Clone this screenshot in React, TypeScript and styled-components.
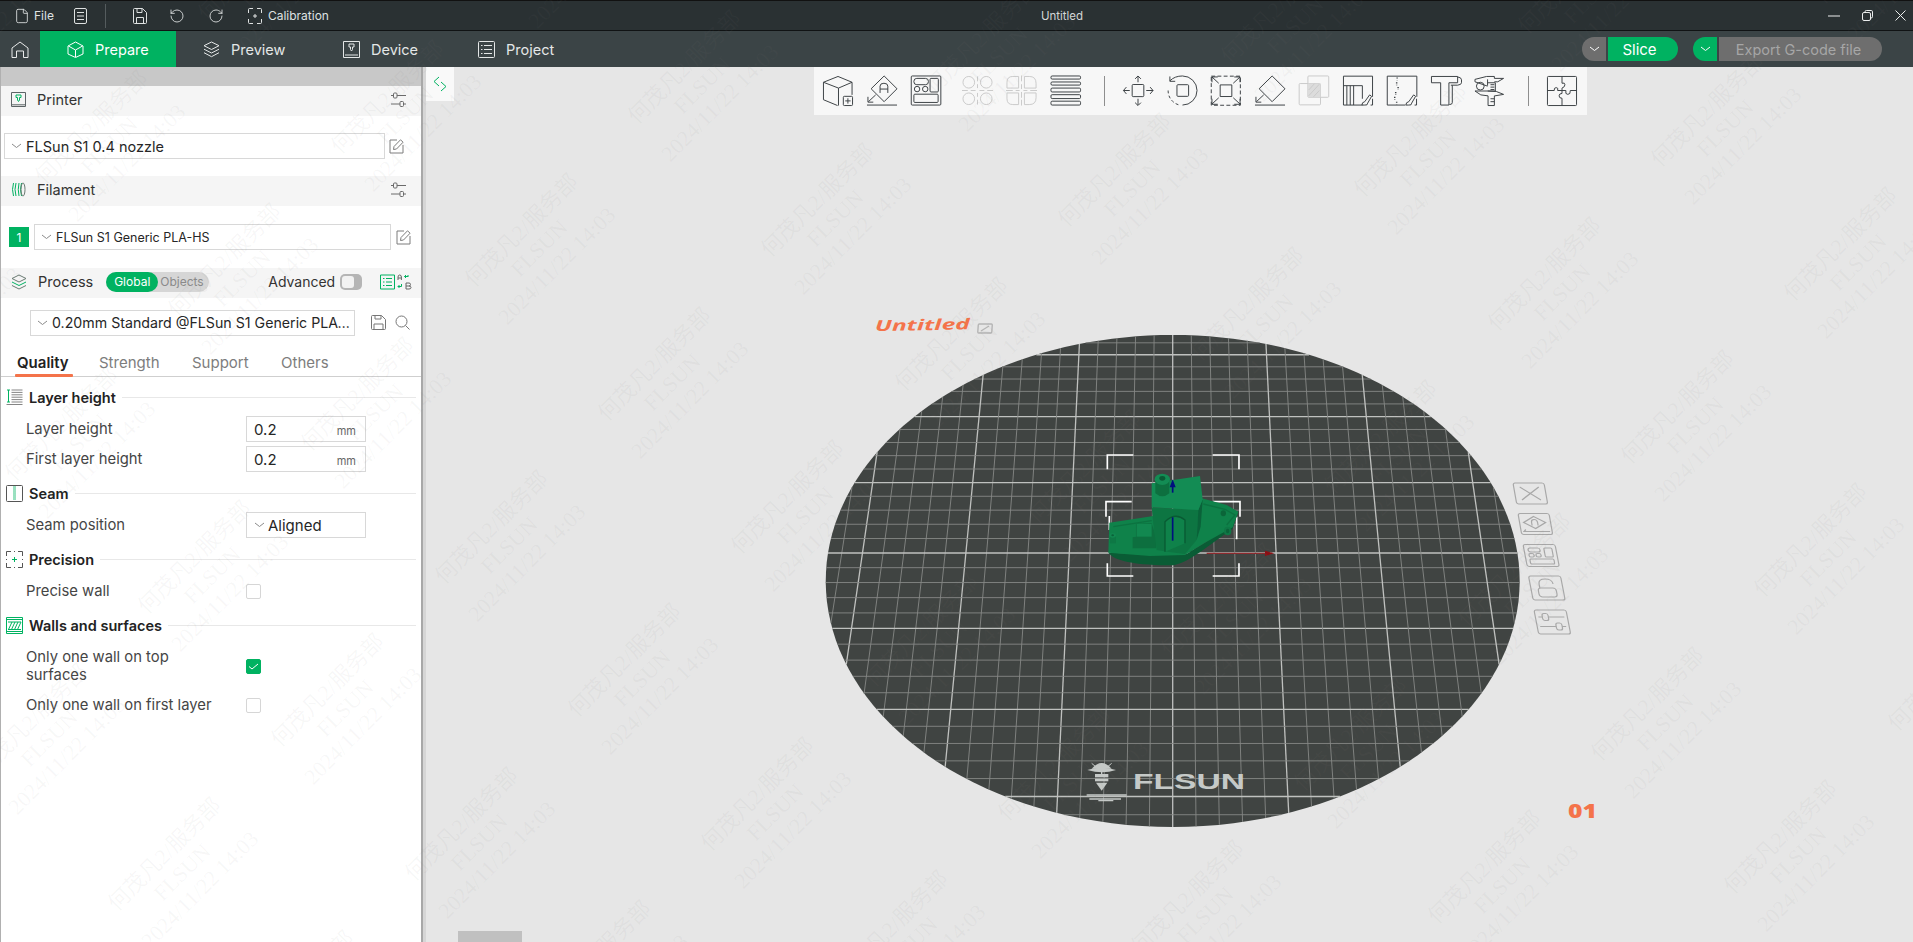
import React from 'react';
import styled, { createGlobalStyle } from 'styled-components';
import { File, RotateCcw, RotateCw } from 'lucide-react';

const GREEN = '#00b261';
const FONT = `Inter, "Noto Sans", "Liberation Sans", sans-serif`;

const Global = createGlobalStyle`
  html, body { margin: 0; padding: 0; background: #e6e6e6; }
  body { font-family: ${FONT}; overflow: hidden; }
  * { box-sizing: border-box; }
`;

const Page = styled.div`
  position: relative; width: 100vw; height: 100vh; display: flex; flex-direction: column; overflow: hidden;
`;

const Glyph = styled.svg<{ $w?: number; $h?: number; $c?: string; $ml?: number }>`
  width: ${p => p.$w ?? 16}px; height: ${p => p.$h ?? p.$w ?? 16}px; flex: none; display: block;
  fill: none; stroke: currentColor; stroke-width: 1; color: ${p => p.$c ?? 'inherit'};
  stroke-linejoin: round; margin-left: ${p => p.$ml ?? 0}px;
`;

/* ---------- title bar ---------- */
const TitleBar = styled.header`
  height: 31px; flex: none; display: flex; align-items: center; background: #2a3133; color: #e4e6e6;
  border-top: 1px solid #111; border-bottom: 1px solid #101314; padding-left: 14px;
`;
const TitleTools = styled.div`
  width: 1026px; flex: none; display: flex; align-items: center; font-size: 12px;
`;
const TitleItem = styled.span<{ $ml?: number }>`
  display: flex; align-items: center; gap: 4px; margin-left: ${p => p.$ml ?? 0}px; color: #dfe2e2;
`;
const TitleSep = styled.i`
  width: 1px; height: 24px; background: #555c5e; margin-left: 18px;
`;
const DocTitle = styled.div`
  font-size: 11.5px; color: #d4d6d6; width: 44px; text-align: center; white-space: nowrap;
`;
const WinControls = styled.div`
  margin-left: auto; display: flex; align-items: center; gap: 22px; padding-right: 7px; color: #eceeee;
`;

/* ---------- nav ---------- */
const NavBar = styled.nav`
  height: 36px; flex: none; display: flex; background: #3b4446; color: #e8eaea;
`;
const HomeBtn = styled.div`
  width: 40px; display: flex; align-items: center; justify-content: center; color: #e8eaea;
`;
const NavTab = styled.div<{ $active?: boolean; $w: number }>`
  width: ${p => p.$w}px; display: flex; align-items: center; gap: 11px; padding-left: 27px; font-size: 14.5px;
  background: ${p => (p.$active ? GREEN : 'transparent')}; color: ${p => (p.$active ? '#fff' : '#e4e7e7')};
`;
const NavActions = styled.div`
  margin-left: auto; display: flex; align-items: center; gap: 15px; padding-right: 31px;
`;
const SplitBtn = styled.div`
  display: flex; align-items: stretch; height: 24px; gap: 2px;
`;
const SplitCaret = styled.div<{ $on?: boolean }>`
  width: 24px; border-radius: 12px 0 0 12px; display: flex; align-items: center; justify-content: center;
  background: ${p => (p.$on ? GREEN : '#6e6e6e')}; color: #fff;
`;
const SplitMain = styled.div<{ $on?: boolean; $w: number }>`
  width: ${p => p.$w}px; border-radius: 0 12px 12px 0; display: flex; align-items: center; justify-content: center;
  font-size: ${p => (p.$on ? 15 : 14.5)}px; padding-right: ${p => (p.$on ? 7 : 4)}px;
  background: ${p => (p.$on ? GREEN : '#6e6e6e')}; color: ${p => (p.$on ? '#fff' : '#a6a6a6')};
`;

/* ---------- sidebar ---------- */
const Body = styled.main`
  flex: 1; display: flex; min-height: 0;
`;
const Sidebar = styled.aside`
  width: 423px; flex: none; background: #fff; border-left: 1px solid #b0b0b0; border-right: 2px solid #a8a8a8;
  display: flex; flex-direction: column;
`;
const Divider = styled.div`
  width: 3px; flex: none; background: #d6d6d6;
`;
const GrayStrip = styled.div`
  height: 19px; flex: none; background: #c8c8c8;
`;
const PanelHead = styled.div`
  height: 30px; flex: none; display: flex; align-items: center; background: #f5f5f5; padding: 0 15px 3px 10px;
  font-size: 14.5px; color: #333; gap: 11px;
`;
const PushRight = styled.div<{ $mr?: number }>`
  margin-left: auto; margin-right: ${p => p.$mr ?? 0}px; display: flex; align-items: center;
`;
const SelectRow = styled.div<{ $h: number; $pl: number; $gap: number }>`
  height: ${p => p.$h}px; flex: none; display: flex; align-items: center; padding-left: ${p => p.$pl}px; gap: ${p => p.$gap}px;
`;
const Select = styled.div<{ $w: number; $fs?: number }>`
  width: ${p => p.$w}px; height: 26px; flex: none; background: #fff; border: 1px solid #d8d8d8; display: flex; align-items: center;
  padding-left: 6px; gap: 4px; font-size: ${p => p.$fs ?? 14.5}px; color: #262626; min-width: 0;
`;
const Clip = styled.span`
  white-space: nowrap; overflow: hidden; text-overflow: ellipsis; min-width: 0;
`;
const Badge = styled.div`
  width: 20px; height: 20px; flex: none; background: ${GREEN}; color: #fff; font-size: 12px;
  display: flex; align-items: center; justify-content: center;
`;
const Toggle = styled.div`
  width: 103px; height: 20px; flex: none; border-radius: 10px; background: #d6d6d6; display: flex; align-items: center;
  font-size: 12px; color: #8a8a8a; margin-left: 2px;
`;
const TogglePill = styled.span`
  width: 52px; height: 20px; border-radius: 10px; background: ${GREEN}; color: #fff; display: flex; align-items: center; justify-content: center;
`;
const ToggleOff = styled.span`
  margin-left: 2px;
`;
const AdvLabel = styled.span`
  margin-left: 48px; font-size: 14px; color: #333;
`;
const Switch = styled.div`
  width: 22px; height: 16px; flex: none; border-radius: 5px; background: #b5b5b5; margin-left: -6px; display: flex; align-items: center; padding-left: 2px;
  &::before { content: ''; width: 12px; height: 12px; border-radius: 3px; background: #f2f2f2; }
`;
const Tabs = styled.div`
  height: 30px; flex: none; display: flex; border-bottom: 1px solid #cfcfcf; padding-left: 13px; font-size: 15px; color: #7d7d7d;
`;
const Tab = styled.div<{ $active?: boolean; $w: number }>`
  position: relative; width: ${p => p.$w}px; padding: 6px 0 0 3px; font-weight: ${p => (p.$active ? 600 : 400)};
  color: ${p => (p.$active ? '#222' : '#7d7d7d')};
  ${p => p.$active && `&::after { content: ''; position: absolute; left: 1px; bottom: -1px; width: 58px; height: 3px; background: #f4734a; border-radius: 1px; }`}
`;
const Settings = styled.div`
  padding: 7px 5px 0 5px; display: flex; flex-direction: column; gap: 8px;
`;
const Section = styled.section`
  display: flex; flex-direction: column; gap: 4px;
`;
const SecHead = styled.div`
  height: 26px; display: flex; align-items: center; gap: 6px; margin-bottom: 2px; font-size: 14.5px; font-weight: 600; color: #222;
  &::after { content: ''; flex: 1; height: 1px; background: #e8e8e8; margin-left: 0; }
`;
const Row = styled.div<{ $h?: number }>`
  min-height: ${p => p.$h ?? 26}px; display: flex; align-items: center; padding-left: 20px;
`;
const Label = styled.div`
  width: 220px; flex: none; padding: 0 22px 0 0; font-size: 14.8px; line-height: 18px; color: #454545;
`;
const Field = styled.div`
  width: 120px; height: 26px; border: 1px solid #d8d8d8; display: flex; align-items: center; padding: 0 9px 0 7px;
  font-size: 15px; color: #262626; gap: 3px; background: #fff;
`;
const Unit = styled.span`
  margin-left: auto; font-size: 11px; color: #666; padding-top: 3px;
`;
const Check = styled.div<{ $on?: boolean }>`
  width: 15px; height: 15px; border-radius: 2px; border: 1px solid ${p => (p.$on ? GREEN : '#d6d6d6')};
  background: ${p => (p.$on ? GREEN : '#fff')}; color: #fff; display: flex; align-items: center; justify-content: center;
`;

/* ---------- canvas ---------- */
const Canvas = styled.div`
  position: relative; flex: 1; min-width: 0; background: #e6e6e6; overflow: hidden;
`;
const Scene = styled.svg`
  position: absolute; left: 0; top: 0; width: 1487px; height: 875px;
`;
const Toolbar = styled.div`
  position: absolute; left: 388px; top: 0; width: 773px; height: 48px; background: #f7f7f7; display: flex; align-items: center;
  gap: 12px; padding-left: 8px; color: #3a3f42;
`;
const ToolSep = styled.i`
  width: 1px; height: 30px; background: #8e8e8e; margin: 0 5px 0 10px;
`;
const ToolGap = styled.span`
  width: 8px; margin-left: -12px; flex: none;
`;
const Collapse = styled.div`
  position: absolute; left: 0; top: 0; width: 28px; height: 34px; background: #f9f9f9; display: flex; align-items: center; justify-content: center;
`;
const DragHandle = styled.div`
  position: absolute; left: 32px; bottom: 0; width: 64px; height: 11px; background: #c0c0c0;
`;
const WatermarkLayer = styled.div`
  position: absolute; inset: 0; overflow: hidden; pointer-events: none; z-index: 5;
`;
const Mark = styled.div`
  position: absolute; transform: translate(-50%, -50%) rotate(-45deg); text-align: center; white-space: nowrap;
  font: 22px/25px "Liberation Serif", "Noto Sans CJK SC", serif; color: rgba(128, 128, 128, 0.065);
`;

/* ---------- geometry of the print bed ---------- */
const CX = 1172.7, YH = -1581, G = 2134, K = 0.1138, F = 344.7, CELL = 0.06;
const proj = (u: number, v: number): [number, number] => {
  const d = 1 - K * v;
  return [CX + (F * u) / d, YH + G / d];
};
const bedOutline = Array.from({ length: 160 }, (_, i) => {
  const a = (i / 160) * Math.PI * 2;
  return proj(Math.cos(a), Math.sin(a)).map(n => n.toFixed(1)).join(',');
}).join(' ');
type Seg = { x1: number; y1: number; x2: number; y2: number; major: boolean };
const gridSegs: Seg[] = [];
for (let i = -16; i <= 16; i++) {
  const t = i * CELL;
  const s = Math.sqrt(1 - t * t);
  const a = proj(t, -s), b = proj(t, s), c = proj(-s, t), d = proj(s, t);
  gridSegs.push({ x1: a[0], y1: a[1], x2: b[0], y2: b[1], major: i % 5 === 0 });
  gridSegs.push({ x1: c[0], y1: c[1], x2: d[0], y2: d[1], major: i % 5 === 0 });
}

const marks: { x: number; y: number }[] = [];
for (let m = -12; m <= 12; m++) {
  for (let n = -12; n <= 12; n++) {
    const x = 1695 + m * 163.3 + n * 133.3;
    const y = 425 - m * 163.3 + n * 133.3;
    if (x > -140 && x < 2050 && y > -140 && y < 1080) marks.push({ x, y });
  }
}

/* ---------- small icons ---------- */
const Chevron = ({ c = '#8a8a8a' }: { c?: string }) => (
  <Glyph $w={11} $h={6} $c={c} viewBox="0 0 11 6"><path d="M1 1l4.500 3.500L10 1" /></Glyph>
);
const Sliders = () => (
  <Glyph $w={15} $h={16} $c="#6a6a6a" viewBox="0 0 15 16">
    <path d="M0 3.500h2.500M6 3.500h9M0 12h9M12.500 12H15" /><rect x="2.500" y="1" width="3.500" height="5" rx="1" /><rect x="9" y="9.500" width="3.500" height="5" rx="1" />
  </Glyph>
);
const EditBox = () => (
  <Glyph $w={15} $h={15} $c="#7c7c7c" viewBox="0 0 15 15">
    <path d="M8 1H1v13h13V6" /><path d="M4.500 10.500l.5-3L11.500 .8l2.600 2.400L7.500 10z" />
  </Glyph>
);

const ToolIcons = {
  cube: (
    <>
      <path d="M1.500 7L16.500 1 31 7 17 13Z M1.500 7V25L16 31 M17 13V31 M31 7V20" />
      <rect x="22" y="21.500" width="9.500" height="9.500" rx="1" /><path d="M24 26.200h5.500M26.700 23.500v5.500" />
    </>
  ),
  arrange: (
    <>
      <path d="M18.700 .5L32 13.700 18.700 27 5.300 13.700Z" /><path d="M14.500 18V11q0-3 4-3t4 3v7M14.500 14h8" />
      <path d="M10 20L2.500 27M2 22v5.500h5.500M1 30.500h31" />
    </>
  ),
  plates: (
    <>
      <rect x="1.300" y=".5" width="30.500" height="30" rx="1" /><rect x="4" y="3" width="15" height="6.500" rx="3" /><rect x="20.700" y="3" width="8.500" height="14" rx="1" />
      <circle cx="7.300" cy="14" r="2.800" /><circle cx="15.700" cy="14" r="2.800" /><rect x="4" y="19.300" width="25" height="8.500" rx="1" />
    </>
  ),
  split: (
    <>
      <circle cx="7" cy="7" r="6" /><circle cx="25" cy="7" r="6" /><circle cx="7" cy="24" r="6" /><circle cx="25" cy="24" r="6" />
      <path d="M16 1v5M16 9v4M16 18v4M16 25v5M0 15.500h6M9 15.500h5M18 15.500h5M26 15.500h6" />
    </>
  ),
  parts: (
    <>
      <path d="M13 1H7Q1 1 1 7v6h12z M19 1h5q7 0 7 7v5H19z M13 18H1v6q0 6 6 6h6z M19 18h12v5q0 7-7 7h-5z" />
      <path d="M16 0v6M16 9v5M16 17v6M16 25v6M0 15.500h7M10 15.500h4M18 15.500h4M25 15.500h7" />
    </>
  ),
  layers: (
    <>
      <rect x="1" y=".5" width="30.500" height="3.200" rx="1.200" /><rect x="1" y="6.700" width="30.500" height="3.200" rx="1.200" /><rect x="1" y="13" width="30.500" height="4" rx="1.200" />
      <rect x="1" y="19.800" width="30.500" height="4" rx="1.200" /><rect x="1" y="26.500" width="30.500" height="4" rx="1.200" />
    </>
  ),
  move: (
    <>
      <rect x="10.500" y="9.300" width="12" height="12.500" rx="1" />
      <path d="M16.500 7V1M13.500 3.500l3-3 3 3M16.500 24v6.500M13.500 28l3 3 3-3M8 15.500H1.500M4.500 12l-3 3.500 3 3.500M25 15.500h7M29 12l3 3.500-3 3.500" />
    </>
  ),
  rotate: (
    <>
      <rect x="11.300" y="9.500" width="12" height="12" rx="1" />
      <path d="M4 5.500Q9 .5 17 .5a15 15 0 0 1 0 30" /><path d="M4 1v5h5.500" />
      <path d="M2.200 15.500a15 15 0 0 0 12 15" strokeDasharray="3 2.400" />
    </>
  ),
  scale: (
    <>
      <rect x="1.300" y=".7" width="30" height="30" strokeDasharray="4 2.400" /><rect x="10.500" y="9.700" width="12" height="12" />
      <path d="M9 8L2 1.500M2 7V1.500h6M24 8l7-6.500M31 7V1.500h-6M9 23l-7 6.500M2 24v5.700h6M24 23l7 6.500M31 24v5.700h-6" />
    </>
  ),
  flatten: (
    <>
      <path d="M18.700 .5L32 13.700 18.700 27 5.300 13.700Z" /><path d="M10 20L2.500 27M2 22v5.500h5.500M1 30.500h31" />
    </>
  ),
  boolean: (
    <>
      <rect x="10.200" y=".5" width="21.500" height="22" rx="1" /><rect x="1.200" y="8.300" width="22" height="22" rx="1" />
      <rect x="10.200" y="8.300" width="13" height="14.200" fill="#dcdcdc" stroke="none" />
      <path d="M11 15l6-6.500M11 21l11-12M16 22l6-6.500" />
    </>
  ),
  fuzzy: (
    <>
      <path d="M21 30.500H1.500V.7h30V22" /><path d="M1.500 10.500h19.500V24" /><path d="M5 10.500v20M8.500 10.500v20M12 10.500v20" />
      <path d="M20.500 30.500q0-3 3-3.500l5-7 2 1.500-4 7q0 2.500-3 2zM31.500 24v6.500h-2" />
    </>
  ),
  seam: (
    <>
      <path d="M20 30.500H1.300V.7h30.500V22" /><path d="M11.500 2v3M11 7v3M12.500 12v3M10 17v3M9 22v3M11 27v3" strokeDasharray="1.200 1.400" strokeWidth="1.500" />
      <path d="M20.500 30.500q0-3 3-3.500l5-7 2 1.500-4 7q0 2.500-3 2zM31.500 24v6.500h-2" />
    </>
  ),
  text: (
    <>
      <path d="M1.500 1h27v6.500H19.500v23h-8.500V7.500H1.500Z" /><path d="M28.500 1.500q4 .5 4 3v3q0 2-4 2.500H21.500M20 30q3 0 3-2V10" />
    </>
  ),
  caliper: (
    <>
      <path d="M1 4l12-3h8v2h9.500l-6 3.500H21M1 4v2.500L14 11M14 4v6.500" /><circle cx="6.500" cy="11" r="4" />
      <path d="M14 7.500h8V16h-8M17 9.500h4M17 12h4M17 14.500h4" />
      <path d="M1 16h13l9 .5 7.500 3-9 1.500H21V31h-6.500V21L7 20z M17 24h4M17 27h4" />
    </>
  ),
  puzzle: (
    <>
      <rect x="1.500" y="1" width="30" height="30" rx="1" />
      <path d="M16.500 1v7q3-1 3 1.500T16.500 13V15.500H12q1-3-1.500-3t-2 3H1.500M16.500 15.500v3q-3 0-3 2.500t3 2.500V31M16.500 15.500h4q-1 4 2 4t2.500-4h6.500" />
    </>
  ),
};
const Tool = ({ k, off }: { k: keyof typeof ToolIcons; off?: boolean }) => (
  <Glyph $w={32} $h={32} $c={off ? '#c9c9c9' : '#3a3f42'} viewBox="0 0 33 32">{ToolIcons[k]}</Glyph>
);

export default function App() {
  return (
    <Page>
      <Global />
      <TitleBar>
        <TitleTools>
          <TitleItem>
            <File size={16} strokeWidth={1.3} />
            File
          </TitleItem>
          <TitleItem $ml={20}>
            <Glyph $w={13} $h={16} viewBox="0 0 13 16"><rect x=".5" y=".5" width="12" height="15" rx="1.500" /><path d="M3 4.500h7M3 8h7M3 11.500h7" /></Glyph>
          </TitleItem>
          <TitleSep />
          <TitleItem $ml={27}>
            <Glyph $w={14} $h={16} viewBox="0 0 14 16"><path d="M1.500 .5h8l4 4v10a1 1 0 0 1-1 1h-11a1 1 0 0 1-1-1v-13a1 1 0 0 1 1-1z" /><path d="M4 .5v4h5v-4M3.500 15.500v-6h7v6" /></Glyph>
          </TitleItem>
          <TitleItem $ml={22}><RotateCcw size={16} strokeWidth={1.3} /></TitleItem>
          <TitleItem $ml={23}><RotateCw size={16} strokeWidth={1.3} /></TitleItem>
          <TitleItem $ml={24}>
            <Glyph $w={14} $h={16} viewBox="0 0 14 16" style={{ marginRight: 2 }}><path d="M.5 5V1.500a1 1 0 0 1 1-1H5M9 .5h3.500a1 1 0 0 1 1 1V5M13.500 11v3.500a1 1 0 0 1-1 1H9M5 15.500H1.500a1 1 0 0 1-1-1V11M5 8h4M7 6v4" /></Glyph>
            Calibration
          </TitleItem>
        </TitleTools>
        <DocTitle>Untitled</DocTitle>
        <WinControls>
          <Glyph $w={12} $h={12} viewBox="0 0 12 12"><path d="M0 6h12" /></Glyph>
          <Glyph $w={11} $h={11} viewBox="0 0 11 11"><rect x=".5" y="2.500" width="8" height="8" rx="1.500" /><path d="M3 2.500V1.800Q3 .5 4.300 .5h5Q10.500 .5 10.500 1.800v5Q10.500 8 9 8" /></Glyph>
          <Glyph $w={11} $h={11} viewBox="0 0 11 11"><path d="M.5 .5l10 10M10.500 .5l-10 10" /></Glyph>
        </WinControls>
      </TitleBar>

      <NavBar>
        <HomeBtn>
          <Glyph $w={18} $h={17} viewBox="0 0 18 17"><path d="M1 7L9 1l8 6v9.500h-4.500V10h-7v6.500H1z" /></Glyph>
        </HomeBtn>
        <NavTab $active $w={136}>
          <Glyph $w={17} $h={17} viewBox="0 0 17 17"><path d="M8.500 1L16 5v8l-7.500 3.500L1 13V5zM1.500 5l7 4 7-4M8.500 9v7" /></Glyph>
          Prepare
        </NavTab>
        <NavTab $w={140}>
          <Glyph $w={17} $h={17} viewBox="0 0 17 17"><path d="M8.500 1L16 4.700 8.500 8.500 1 4.700zM1 8.200l7.500 3.800L16 8.200M1 11.700l7.500 4L16 11.700" /></Glyph>
          Preview
        </NavTab>
        <NavTab $w={135}>
          <Glyph $w={17} $h={17} viewBox="0 0 17 17"><rect x=".5" y=".5" width="16" height="16" /><path d="M2 14h13M6 3h5v3H9.500v2.500L8.500 10l-1-1.500V6H6z" /></Glyph>
          Device
        </NavTab>
        <NavTab $w={135}>
          <Glyph $w={17} $h={17} viewBox="0 0 17 17"><rect x=".5" y=".5" width="16" height="16" rx="1" /><path d="M3 4.500h1.500M6 4.500h8M3 8.500h1.500M6 8.500h8M3 12.500h1.500M6 12.500h8" /></Glyph>
          Project
        </NavTab>
        <NavActions>
          <SplitBtn>
            <SplitCaret><Chevron c="#fff" /></SplitCaret>
            <SplitMain $on $w={70}>Slice</SplitMain>
          </SplitBtn>
          <SplitBtn>
            <SplitCaret $on><Chevron c="#fff" /></SplitCaret>
            <SplitMain $w={163}>Export G-code file</SplitMain>
          </SplitBtn>
        </NavActions>
      </NavBar>

      <Body>
        <Sidebar>
          <GrayStrip />
          <PanelHead>
            <Glyph $w={15} $h={15} $c="#5c6466" viewBox="0 0 15 15">
              <rect x=".5" y=".5" width="14" height="14" /><path d="M1 12.800h13" /><path d="M5 3h5v2.500H8.500V8L7.500 9.500 6.500 8V5.500H5z" stroke={GREEN} />
            </Glyph>
            Printer
            <PushRight><Sliders /></PushRight>
          </PanelHead>
          <SelectRow $h={60} $pl={3} $gap={4}>
            <Select $w={381}><Chevron /><Clip>FLSun S1 0.4 nozzle</Clip></Select>
            <EditBox />
          </SelectRow>
          <PanelHead>
            <Glyph $w={15} $h={15} $c="#6a7a72" viewBox="0 0 15 15">
              <path d="M2.500 1Q.5 7.500 2.500 14M5 1Q3 7.500 5 14M8 1Q6.500 7.500 8 14M10.500 1Q8.500 7.500 10.500 14" stroke={GREEN} /><ellipse cx="12" cy="7.500" rx="2" ry="6.500" />
            </Glyph>
            Filament
            <PushRight><Sliders /></PushRight>
          </PanelHead>
          <SelectRow $h={62} $pl={8} $gap={5}>
            <Badge>1</Badge>
            <Select $w={357} $fs={12.500}><Chevron /><Clip>FLSun S1 Generic PLA-HS</Clip></Select>
            <EditBox />
          </SelectRow>
          <PanelHead>
            <Glyph $w={16} $h={16} $c="#6a7a72" viewBox="0 0 16 16">
              <path d="M8 1l7 3.500L8 8 1 4.500z" /><path d="M1 8l7 3.500L15 8" stroke={GREEN} /><path d="M1 11.500L8 15l7-3.500" />
            </Glyph>
            Process
            <Toggle>
              <TogglePill>Global</TogglePill>
              <ToggleOff>Objects</ToggleOff>
            </Toggle>
            <AdvLabel>Advanced</AdvLabel>
            <Switch />
            <PushRight $mr={-7}>
              <Glyph $w={33} $h={16} $c="#666" viewBox="0 0 33 16">
                <rect x=".5" y="1" width="14" height="14" stroke={GREEN} /><path d="M3 4.500h1.500M6 4.500h6M3 8h1.500M6 8h6M3 11.500h1.500M6 11.500h6" stroke={GREEN} />
                <path d="M18 6V3q0-2 1.700-2t1.700 2v3M18 4h3.400" /><path d="M28 2.500h-3.500L26 1M24.500 2.500L26 4M28 1v2" stroke={GREEN} />
                <path d="M21.500 10v2.500H18L19.500 11M18 12.500L19.500 14" stroke={GREEN} /><path d="M26 9h3q1.500 0 1.500 1.500T29 12h-3zM29 12q2 0 2 1.500T29 15h-3v-3" />
              </Glyph>
            </PushRight>
          </PanelHead>
          <SelectRow $h={49} $pl={29} $gap={16}>
            <Select $w={325} $fs={14.2}><Chevron /><Clip>0.20mm Standard @FLSun S1 Generic PLA-HS</Clip></Select>
            <Glyph $w={15} $h={15} $c="#777" viewBox="0 0 15 15"><path d="M1.500 .5h9l4 4v9a1 1 0 0 1-1 1h-12a1 1 0 0 1-1-1v-12a1 1 0 0 1 1-1z" /><path d="M4 .5v3.500h6V.5M3 14.500V9h9v5.500" /></Glyph>
            <Glyph $w={15} $h={15} $c="#777" $ml={-7} viewBox="0 0 15 15"><circle cx="6.500" cy="6.500" r="5.500" /><path d="M10.500 10.500l4 4" /></Glyph>
          </SelectRow>
          <Tabs>
            <Tab $active $w={82}>Quality</Tab>
            <Tab $w={93}>Strength</Tab>
            <Tab $w={89}>Support</Tab>
            <Tab $w={80}>Others</Tab>
          </Tabs>
          <Settings>
            <Section>
              <SecHead>
                <Glyph $w={17} $h={17} $c="#666" viewBox="0 0 17 17">
                  <path d="M1 1h3M2.500 1v12M1 13h3" stroke={GREEN} /><path d="M5.500 1h11M5.500 3.400h11M5.500 5.800h11M5.500 8.200h11M5.500 10.600h11M5.500 13h11M.5 15.500h16" strokeWidth=".8" />
                </Glyph>
                Layer height
              </SecHead>
              <Row><Label>Layer height</Label><Field>0.2<Unit>mm</Unit></Field></Row>
              <Row><Label>First layer height</Label><Field>0.2<Unit>mm</Unit></Field></Row>
            </Section>
            <Section>
              <SecHead>
                <Glyph $w={17} $h={17} $c="#555" viewBox="0 0 17 17">
                  <rect x=".5" y=".5" width="16" height="16" rx="1" /><path d="M7 2h3M7 4h3M7 6h3M7 8h3M7 10h3M7 12h3M7 14h3" stroke={GREEN} strokeWidth=".8" />
                </Glyph>
                Seam
              </SecHead>
              <Row><Label>Seam position</Label><Field><Chevron />Aligned</Field></Row>
            </Section>
            <Section>
              <SecHead>
                <Glyph $w={17} $h={17} $c="#555" viewBox="0 0 17 17">
                  <path d="M.5 5V.5H5M8 .5h1M12 .5h4.500V5M.5 8v1M16.500 8v1M.5 12v4.500H5M8 16.500h1M12 16.500h4.500V12" /><path d="M6 8.500h5M8.500 6v5" stroke={GREEN} />
                </Glyph>
                Precision
              </SecHead>
              <Row><Label>Precise wall</Label><Check /></Row>
            </Section>
            <Section>
              <SecHead>
                <Glyph $w={17} $h={17} $c={GREEN} viewBox="0 0 17 17">
                  <path d="M.5 .5h16M.5 2.500h16M.5 14.500h16M.5 16.500h16M.5 .5v16M16.500 .5v16" /><path d="M2.500 12.500L6 5M5.500 12.500L9 5M8.500 12.500L12 5M11.500 12.500L15 5M2 5h13M2 12.500h13" />
                </Glyph>
                Walls and surfaces
              </SecHead>
              <Row $h={44}>
                <Label>Only one wall on top surfaces</Label>
                <Check $on><Glyph $w={11} $h={9} viewBox="0 0 11 9"><path d="M1 4.500l3 2.500 6-5" /></Glyph></Check>
              </Row>
              <Row><Label>Only one wall on first layer</Label><Check /></Row>
            </Section>
          </Settings>
        </Sidebar>
        <Divider />

        <Canvas>
          <Scene viewBox="426 67 1487 875">
            <polygon points={bedOutline} fill="#404442" />
            {gridSegs.map((s, i) => (
              <line key={i} x1={s.x1} y1={s.y1} x2={s.x2} y2={s.y2} stroke={s.major ? '#bfc1bf' : '#868886'} strokeWidth={s.major ? 1.3 : 0.9} />
            ))}

            <text x="875" y="331" transform="rotate(-1 875 331)" textLength="95" lengthAdjust="spacingAndGlyphs"
              fontFamily='"Open Sans", sans-serif' fontWeight="700" fontStyle="italic" fontSize="15" fill="#f4734a">Untitled</text>
            <g fill="none" stroke="#b5b5b5" strokeWidth="1.400">
              <rect x="978" y="324" width="14" height="9" rx="1" transform="skewX(-4) translate(23 0)" />
              <path d="M981 331l8-5" />
            </g>
            <text x="1568" y="818" textLength="29" lengthAdjust="spacingAndGlyphs" fontFamily='"Open Sans", sans-serif' fontWeight="800" fontSize="20" fill="#f4734a">01</text>

            {/* FLSUN bed logo */}
            <g transform="translate(1040 730) scale(.3333)" fill="#c5c9c7" stroke="none">
              <path d="M142 120q40-14 86 0-40 14-86 0z" /><path d="M155 116q30-34 60 0z" />
              <path d="M155 100l12 10M215 100l-12 10" stroke="#c5c9c7" strokeWidth="3" />
              <path d="M185 120v12" stroke="#c5c9c7" strokeWidth="4" />
              <rect x="165" y="132" width="40" height="10" /><rect x="165" y="146" width="40" height="8" /><path d="M168 158h34l-17 24z" />
              <path d="M140 195h120M148 207h95M175 212h45" stroke="#c5c9c7" strokeWidth="4" />
            </g>
            <text x="1133" y="789" textLength="112" lengthAdjust="spacingAndGlyphs" fontFamily='"Liberation Sans", sans-serif' fontWeight="700" fontSize="22" fill="#c5c9c7">FLSUN</text>

            {/* boat */}
            <g transform="translate(1050 430) scale(.3333)">
              <g fill="none" stroke="#fff" strokeWidth="5">
                <path d="M172 118V75H250M488 75H567V118M168 260V215H245M490 215H570V260M172 400V438H250M488 438H567V400M178 258V300M560 260V328" />
              </g>
              <path d="M175 368C195 395 260 405 370 406C420 395 470 350 548 296L565 245L470 335L405 375Z" fill="#0a5c35" />
              <path d="M175 368L178 278L310 258L455 205L530 225L565 245L548 292L470 335L405 375L300 378Z" fill="#0f824a" />
              <path d="M190 290L305 272M460 222L525 238L555 255L530 285" fill="none" stroke="#0c7240" strokeWidth="4" />
              <path d="M258 282L305 280L318 320V355H248V322L258 320Z" fill="#0d6f3f" />
              <rect x="260" y="282" width="45" height="38" fill="#128850" />
              <rect x="180" y="316" width="18" height="24" fill="#0e7845" /><ellipse cx="188" cy="316" rx="10" ry="7" fill="#128850" /><ellipse cx="188" cy="316" rx="4" ry="3" fill="#0a6239" />
              <ellipse cx="533" cy="303" rx="11" ry="13" fill="#0e7845" /><ellipse cx="533" cy="303" rx="5" ry="7" fill="#0a6239" />
              <ellipse cx="520" cy="250" rx="8" ry="9" fill="#0b6539" />
              <path d="M305 232L445 240L440 330L405 372L352 365L320 360L312 300Z" fill="#0d7542" />
              <path d="M445 240L458 208L452 290L440 330Z" fill="#0a6239" />
              <path d="M305 160L450 138L458 208L445 240L305 232Z" fill="#138c54" />
              <path d="M345 365V275Q375 245 405 270V340" fill="#0f824a" stroke="#095a33" strokeWidth="4" />
              <path d="M316 148V190Q337 208 358 190V148Z" fill="#0d6f3f" />
              <ellipse cx="337" cy="148" rx="23" ry="17" fill="#138c54" /><ellipse cx="337" cy="145" rx="9" ry="7" fill="#0a5a34" />
              <path d="M368 262V332" stroke="#00107e" strokeWidth="5" /><path d="M368 165V188" stroke="#00107e" strokeWidth="5" /><path d="M368 148L359 172H377Z" fill="#00107e" />
              <path d="M470 370H650" stroke="#8c0f14" strokeWidth="3" /><path d="M645 362L673 370L645 378Z" fill="#8c0f14" />
            </g>

            {/* gizmos beside the bed */}
            <g fill="none" stroke="#a8a8a8" strokeWidth="1.200">
              <g transform="translate(1513 483) skewX(10)">
                <rect width="31" height="21" rx="2" /><path d="M6 4l19 13M25 4L6 17" />
              </g>
              <g transform="translate(1518 513.500) skewX(10)">
                <rect width="31" height="21" rx="2" /><path d="M15 3l11 6-11 6-11-6zM12 9q0-3 3-3t3 3v3M12 9v3M2 18h27M5 16l-2 2" />
              </g>
              <g transform="translate(1523 544.500) skewX(11)">
                <rect width="32" height="22" rx="2" /><rect x="4" y="3.500" width="12" height="4" rx="2" /><rect x="20" y="3.500" width="8" height="9" rx="1" /><rect x="4" y="9" width="5" height="3.500" rx="1.500" /><rect x="11" y="9" width="5" height="3.500" rx="1.500" /><rect x="4" y="14.500" width="24" height="5" rx="1" />
              </g>
              <g transform="translate(1528.500 576) skewX(11)">
                <rect width="32" height="24" rx="2" /><rect x="7" y="12" width="18" height="9" rx="3" /><path d="M9 12V8q0-5 7-5t7 5" />
              </g>
              <g transform="translate(1534 610) skewX(11)">
                <rect width="32" height="24" rx="2" /><rect x="7" y="3.500" width="6" height="7" rx="2" /><rect x="19" y="13" width="6" height="7" rx="2" /><path d="M3 7h4M13 7h16M3 16.500h16M25 16.500h4" />
              </g>
            </g>
          </Scene>

          <Collapse>
            <Glyph $w={14} $h={16} $c={GREEN} viewBox="0 0 14 16"><path d="M6 1L1 5.500 6 10M8 6l5 4.500L8 15" /></Glyph>
          </Collapse>
          <DragHandle />

          <Toolbar>
            <Tool k="cube" /><Tool k="arrange" /><Tool k="plates" />
            <ToolGap />
            <Tool k="split" off /><Tool k="parts" off /><Tool k="layers" />
            <ToolSep />
            <Tool k="move" /><Tool k="rotate" /><Tool k="scale" /><Tool k="flatten" /><Tool k="boolean" off />
            <Tool k="fuzzy" /><Tool k="seam" /><Tool k="text" /><Tool k="caliper" />
            <ToolSep />
            <Tool k="puzzle" />
          </Toolbar>
        </Canvas>
      </Body>

      <WatermarkLayer>
        {marks.map((m, i) => (
          <Mark key={i} style={{ left: m.x, top: m.y }}>
            何茂凡2/服务部<br />FLSUN<br />2024/11/22 14:03
          </Mark>
        ))}
      </WatermarkLayer>
    </Page>
  );
}
